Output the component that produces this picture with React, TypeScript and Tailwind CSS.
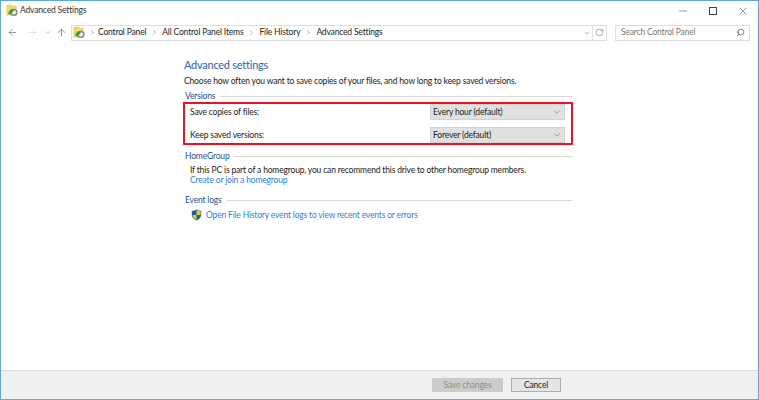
import { ArrowLeft, ArrowRight, ArrowUp, ChevronDown, ChevronRight, RotateCw, Search, Minus, X } from "lucide-react";

function FolderIcon() {
  return (
    <svg width="13" height="13" viewBox="0 0 14 14">
      <path d="M1 1h5l1 1.500h4V12H1z" fill="#f3d56f" stroke="#d9b84f" strokeWidth="0.5" />
      <circle cx="8.500" cy="9" r="4" fill="#7f8a86" />
      <circle cx="8.500" cy="9" r="2.400" fill="#f2f2f2" />
      <path d="M2.500 10.500a5 5 0 0 1 5-5l1 1.500-3.500 4.500z" fill="#37a62f" />
    </svg>
  );
}

function ShieldIcon() {
  return (
    <svg width="11" height="12" viewBox="0 0 12 14">
      <path d="M6 0.500c1.500 1 3.300 1.500 5.500 1.500v4.500c0 3.300-2.300 5.800-5.500 7-3.200-1.200-5.500-3.700-5.500-7V2C2.700 2 4.500 1.500 6 0.500z" fill="#1f5fa8" />
      <path d="M6 1.500V7h4.800V2.700C9 2.600 7.400 2.200 6 1.500z" fill="#f5c518" />
      <path d="M6 7v5.800C3.600 11.800 1.700 9.800 1.300 7z" fill="#f5c518" />
    </svg>
  );
}

function SectionTitle({ label }: { label: string }) {
  return (
    <div className="flex items-center gap-[5px] h-[12px]">
      <span className="text-[#27508f] pl-px">{label}</span>
      <div className="flex-1 h-px bg-[#d9d9d9]" />
    </div>
  );
}

function Select({ value }: { value: string }) {
  return (
    <div className="w-[135px] h-[16px] bg-[#e0e0e0] border border-[#d2d2d2] flex items-center justify-between pl-[2px] pr-[2px] text-[#222]">
      <span className="pt-px">{value}</span>
      <ChevronDown size={10} strokeWidth={1.2} className="text-[#555]" />
    </div>
  );
}

function Crumb({ label }: { label: string }) {
  return (
    <>
      <ChevronRight size={7} strokeWidth={1.8} className="text-[#666] mx-[4.500px]" />
      <span>{label}</span>
    </>
  );
}

export default function App() {
  return (
    <div
      className="w-[759px] h-[400px] flex flex-col bg-white border border-[#5aa9e6] overflow-hidden text-[8.500px] tracking-[-0.17px] text-[#222]"
      style={{ fontFamily: 'Lato, Roboto, sans-serif' }}
    >
      {/* Title bar */}
      <div className="h-[19px] flex items-center pl-[5px] shrink-0">
        <FolderIcon />
        <span className="ml-[1px] text-[#333]">Advanced Settings</span>
        <div className="ml-auto flex items-center">
          <div className="w-[30px] flex justify-center"><Minus size={12} strokeWidth={1} className="text-[#333]" /></div>
          <div className="w-[30px] flex justify-center"><div className="w-[8px] h-[8px] border border-[#444]" /></div>
          <div className="w-[30px] flex justify-center"><X size={12} strokeWidth={1} className="text-[#333]" /></div>
        </div>
      </div>

      {/* Nav bar */}
      <div className="h-[25px] flex items-center pl-[6px] pr-[8px] shrink-0">
        <ArrowLeft size={11} strokeWidth={1.4} className="text-[#666]" />
        <ArrowRight size={11} strokeWidth={1.4} className="text-[#d4d4d4] ml-[9px]" />
        <ChevronDown size={7} strokeWidth={1.6} className="text-[#888] ml-[6px]" />
        <ArrowUp size={11} strokeWidth={1.4} className="text-[#555] ml-[5px]" />
        <div className="ml-[4px] w-[521px] h-[16px] border border-[#dedede] border-r-0 flex items-center pl-[1px]">
          <FolderIcon />
          <ChevronRight size={7} strokeWidth={1.8} className="text-[#666] ml-[3px] mr-[2px]" />
          <span>Control Panel</span>
          <Crumb label="All Control Panel Items" />
          <Crumb label="File History" />
          <Crumb label="Advanced Settings" />
          <div className="ml-auto flex items-center pr-[1px]">
            <ChevronDown size={8} strokeWidth={1.6} className="text-[#666]" />
          </div>
        </div>
        <div className="w-[15px] h-[16px] border border-[#dedede] flex items-center justify-center">
          <RotateCw size={9} strokeWidth={1.3} className="text-[#555]" />
        </div>
        <div className="ml-[8px] w-[135px] h-[16px] border border-[#dedede] flex items-center justify-between pl-[5px] pr-[4px] text-[#777]">
          <span>Search Control Panel</span>
          <Search size={9} strokeWidth={1.8} className="text-[#444] -scale-x-100" />
        </div>
      </div>

      {/* Content */}
      <div className="flex-1 pl-[183px] pt-[12px]">
        <h1 className="text-[#2a62b0] text-[11px] tracking-[-0.25px] leading-[16px] font-normal">Advanced settings</h1>
        <p className="mt-[2px] leading-[13px] whitespace-nowrap">Choose how often you want to save copies of your files, and how long to keep saved versions.</p>

        <div className="mt-[2px] w-[388px]">
          <SectionTitle label="Versions" />
        </div>
        <div className="w-[390px] h-[43px] -ml-px border-2 border-[#f01020] flex flex-col gap-[7px] pl-[5px] pr-[6px]">
          <div className="flex items-center justify-between">
            <span className="pt-px">Save copies of files:</span>
            <Select value="Every hour (default)" />
          </div>
          <div className="flex items-center justify-between">
            <span className="pt-px">Keep saved versions:</span>
            <Select value="Forever (default)" />
          </div>
        </div>

        <div className="mt-[5px] w-[388px]">
          <SectionTitle label="HomeGroup" />
          <div className="pl-[6px] mt-[3px] leading-[10px]">
            <p className="whitespace-nowrap">If this PC is part of a homegroup, you can recommend this drive to other homegroup members.</p>
            <a className="text-[#2f80dd]">Create or join a homegroup</a>
          </div>
        </div>

        <div className="mt-[9px] w-[388px]">
          <SectionTitle label="Event logs" />
          <div className="pl-[7px] mt-[2px] h-[14px] flex items-center gap-[4px]">
            <ShieldIcon />
            <a className="text-[#2f80dd]">Open File History event logs to view recent events or errors</a>
          </div>
        </div>
      </div>

      {/* Footer */}
      <div className="h-[29px] shrink-0 bg-[#f0f0f0] border-t border-[#dcdcdc] flex items-center justify-end pr-[197px] gap-[8px]">
        <button className="w-[71px] h-[14px] bg-[#cccccc] text-[#8f8f8f] flex items-center justify-center">Save changes</button>
        <button className="w-[50px] h-[14px] bg-[#e5e5e5] border border-[#adadad] text-[#222] flex items-center justify-center">Cancel</button>
      </div>
    </div>
  );
}
